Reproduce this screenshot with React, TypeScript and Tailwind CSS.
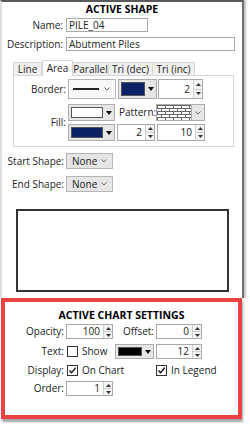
import React from "react";

const font = { fontFamily: '"Open Sans", "Noto Sans", sans-serif' };

function Up() {
  return (
    <svg width="5" height="3" viewBox="0 0 5 3">
      <path d="M0 3 L2.5 0 L5 3 Z" fill="#333" />
    </svg>
  );
}
function Down() {
  return (
    <svg width="5" height="3" viewBox="0 0 5 3">
      <path d="M0 0 L2.5 3 L5 0 Z" fill="#333" />
    </svg>
  );
}

function Spinner({ value, w, h }: { value: string; w: string; h: string }) {
  return (
    <div className={`flex ${w} ${h} border border-[#a9a9a9] bg-white`}>
      <div className="flex-1 flex items-center justify-end pr-[3px] text-[10px] text-[#222]">{value}</div>
      <div className="w-[9px] flex flex-col border-l border-[#d0d0d0] bg-[#f3f3f3]">
        <div className="flex-1 flex items-center justify-center border-b border-[#d0d0d0]"><Up /></div>
        <div className="flex-1 flex items-center justify-center"><Down /></div>
      </div>
    </div>
  );
}

function Chevron() {
  return (
    <svg width="6" height="4" viewBox="0 0 6 4">
      <path d="M0.5 0.5 L3 3 L5.5 0.5" fill="none" stroke="#666" strokeWidth="1" />
    </svg>
  );
}

function ColorDrop({ color, w, h }: { color: string; w: string; h: string }) {
  return (
    <div className={`flex items-center ${w} ${h} border border-[#adadad] bg-[#e6e6e6] px-[2px] gap-[3px]`}>
      <div className="flex-1 h-[calc(100%-4px)] border border-[#555]" style={{ background: color }} />
      <svg width="6" height="4" viewBox="0 0 6 4"><path d="M0 0 L3 4 L6 0 Z" fill="#111" /></svg>
    </div>
  );
}

function Check({ checked }: { checked: boolean }) {
  return (
    <div className="w-[11px] h-[11px] border border-[#333] bg-white flex items-center justify-center">
      {checked && (
        <svg width="9" height="9" viewBox="0 0 9 9">
          <path d="M1.5 4.5 L3.6 6.8 L7.8 1.6" fill="none" stroke="#111" strokeWidth="1.4" />
        </svg>
      )}
    </div>
  );
}

function Select({ text }: { text: string }) {
  return (
    <div className="flex items-center w-[47px] h-[16px] border border-[#b5b5b5] bg-[#e5e5e5] pl-[5px] pr-[5px] text-[10px] text-[#222]">
      <span className="flex-1">{text}</span>
      <Chevron />
    </div>
  );
}

function Bricks() {
  return (
    <svg width="35" height="17" viewBox="0 0 35 17">
      <defs>
        <pattern id="brick" width="8" height="6" patternUnits="userSpaceOnUse">
          <rect width="8" height="6" fill="white" />
          <path d="M0 0.5 H8 M0 3.5 H8 M0.5 0.5 V3.5 M4.5 3.5 V6" stroke="#666" strokeWidth="1" />
        </pattern>
      </defs>
      <rect width="35" height="17" fill="url(#brick)" />
    </svg>
  );
}

export default function App() {
  return (
    <div className="w-[250px] h-[426px] bg-white overflow-hidden text-[#222] whitespace-nowrap text-[10px]" style={font}>
      {/* upper panel */}
      <div className="w-[244px] h-[298px] border-t-2 border-t-[#5a5a5a] border-l-2 border-l-[#dedede] border-r-2 border-r-[#6e6e6e] shadow-[2px_0_2px_rgba(0,0,0,0.25)] flex flex-col">
        <div className="h-[14px] text-center text-[10.5px] font-bold leading-[14px] text-black">ACTIVE SHAPE</div>
        <div className="flex items-center mt-[2px] h-[14px]">
          <div className="w-[61px] text-right">Name:</div>
          <div className="ml-[3px] w-[82px] h-[14px] border border-[#a9a9a9] leading-[12px] pl-[2px]">PILE_04</div>
        </div>
        <div className="flex items-center mt-[5px] h-[14px]">
          <div className="w-[61px] text-right">Description:</div>
          <div className="ml-[3px] w-[169px] h-[14px] border border-[#a9a9a9] leading-[12px] pl-[2px]">Abutment Piles</div>
        </div>
        {/* tabs */}
        <div className="flex items-end mt-[8px] ml-[11px] h-[16px] relative z-10">
          <div className="h-[13px] border border-b-0 border-[#d6d6d6] bg-[#f0f0f0] leading-[12px] w-[29px] text-center">Line</div>
          <div className="h-[16px] border border-b-0 border-[#d6d6d6] bg-white leading-[14px] w-[31px] text-center -mb-[1px] pb-[1px]">Area</div>
          <div className="h-[13px] border border-b-0 border-l-0 border-[#d6d6d6] bg-[#f0f0f0] leading-[12px] w-[36px] text-center">Parallel</div>
          <div className="h-[13px] border border-b-0 border-l-0 border-[#d6d6d6] bg-[#f0f0f0] leading-[12px] w-[44px] text-center">Tri (dec)</div>
          <div className="h-[13px] border border-b-0 border-l-0 border-[#d6d6d6] bg-[#f0f0f0] leading-[12px] w-[42px] text-center">Tri (inc)</div>
        </div>
        <div className="ml-[11px] w-[221px] h-[72px] border border-[#d6d6d6] flex flex-col">
          <div className="flex items-center mt-[3px] h-[20px]">
            <div className="w-[52px] text-right">Border:</div>
            <div className="ml-[2px] w-[48px] h-[20px] border border-[#b5b5b5] bg-[#f7f7f7] flex items-center pl-[4px] pr-[5px] gap-[5px]">
              <div className="flex-1 h-[2px] bg-[#222]" />
              <Chevron />
            </div>
            <div className="ml-[2px]"><ColorDrop color="#0b2266" w="w-[39px]" h="h-[20px]" /></div>
            <div className="ml-[1px]"><Spinner value="2" w="w-[45px]" h="h-[20px]" /></div>
          </div>
          <div className="flex mt-[5px]">
            <div className="w-[52px] flex items-center justify-end">Fill:</div>
            <div className="ml-[2px] flex flex-col gap-[3px]">
              <div className="flex items-center h-[17px]">
                <ColorDrop color="#ffffff" w="w-[47px]" h="h-[17px]" />
                <div className="ml-[4px] w-[37px]">Pattern:</div>
                <div className="flex h-[17px]">
                  <div className="border border-[#adadad] w-[36px] h-[17px] overflow-hidden"><Bricks /></div>
                  <div className="w-[13px] h-[17px] border border-l-0 border-[#adadad] bg-[#e5e5e5] flex items-center justify-center"><Chevron /></div>
                </div>
              </div>
              <div className="flex items-center h-[17px]">
                <ColorDrop color="#0b2266" w="w-[47px]" h="h-[17px]" />
                <div className="ml-[2px]"><Spinner value="2" w="w-[38px]" h="h-[17px]" /></div>
                <div className="ml-[2px]"><Spinner value="10" w="w-[48px]" h="h-[17px]" /></div>
              </div>
            </div>
          </div>
        </div>
        <div className="flex items-center mt-[6px] h-[16px]">
          <div className="w-[62px] text-right">Start Shape:</div>
          <div className="ml-[2px]"><Select text="None" /></div>
        </div>
        <div className="flex items-center mt-[7px] h-[16px]">
          <div className="w-[62px] text-right">End Shape:</div>
          <div className="ml-[2px]"><Select text="None" /></div>
        </div>
        <div className="mt-[17px] ml-[14px] w-[213px] h-[83px] border-2 border-[#333] bg-white" />
      </div>
      {/* red box */}
      <div className="ml-[1px] w-[241px] h-[121px] border-4 border-[#ec4242] bg-white shadow-[1px_3px_2px_rgba(0,0,0,0.35)] flex flex-col">
        <div className="mt-[6px] h-[14px] text-center text-[10.5px] font-bold leading-[14px] text-black">ACTIVE CHART SETTINGS</div>
        <div className="flex items-center mt-[2px] h-[15px]">
          <div className="w-[59px] text-right">Opacity:</div>
          <div className="ml-[2px]"><Spinner value="100" w="w-[47px]" h="h-[15px]" /></div>
          <div className="w-[41px] text-right">Offset:</div>
          <div className="ml-[2px]"><Spinner value="0" w="w-[46px]" h="h-[15px]" /></div>
        </div>
        <div className="flex items-center mt-[5px] h-[15px]">
          <div className="w-[59px] text-right">Text:</div>
          <div className="ml-[3px]"><Check checked={false} /></div>
          <div className="ml-[4px] w-[33px]">Show</div>
          <ColorDrop color="#000000" w="w-[39px]" h="h-[15px]" />
          <div className="ml-[2px]"><Spinner value="12" w="w-[46px]" h="h-[15px]" /></div>
        </div>
        <div className="flex items-center mt-[4px] h-[14px]">
          <div className="w-[59px] text-right">Display:</div>
          <div className="ml-[3px]"><Check checked={true} /></div>
          <div className="ml-[4px] w-[74px]">On Chart</div>
          <Check checked={true} />
          <div className="ml-[4px]">In Legend</div>
        </div>
        <div className="flex items-center mt-[4px] h-[15px]">
          <div className="w-[59px] text-right">Order:</div>
          <div className="ml-[2px]"><Spinner value="1" w="w-[47px]" h="h-[15px]" /></div>
        </div>
      </div>
    </div>
  );
}
